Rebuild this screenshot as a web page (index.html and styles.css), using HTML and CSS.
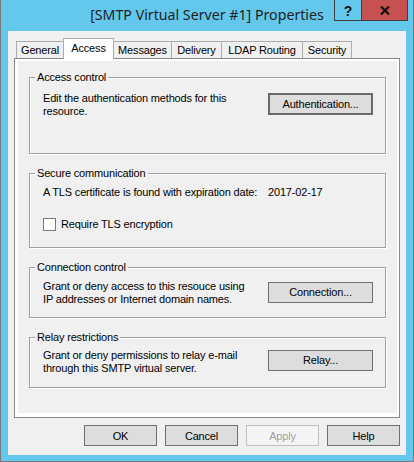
FILE: index.html
```html
<!DOCTYPE html>
<html>
<head>
<meta charset="utf-8">
<link rel="stylesheet" href="styles.css">
</head>
<body>
<div class="window">
  <div class="titlebar">
    <div class="title">[SMTP Virtual Server #1] Properties</div>
    <div class="caption-btns">
      <div class="cbtn help">?</div>
      <div class="cbtn close">
        <svg width="10" height="9" viewBox="0 0 10 9"><path d="M1 0.5 L9 8.5 M9 0.5 L1 8.5" stroke="#111" stroke-width="2.2" fill="none"/></svg>
      </div>
    </div>
  </div>
  <div class="client">
    <div class="tabs">
      <div class="tab t-general">General</div>
      <div class="tab active t-access">Access</div>
      <div class="tab t-messages">Messages</div>
      <div class="tab t-delivery">Delivery</div>
      <div class="tab t-ldap">LDAP Routing</div>
      <div class="tab t-security">Security</div>
    </div>
    <div class="panel">
      <div class="page">
        <fieldset class="group g-access">
          <legend>Access control</legend>
          <div class="gbody">
            <div class="gtext">Edit the authentication methods for this<br>resource.</div>
            <div class="btn default">Authentication...</div>
          </div>
        </fieldset>
        <fieldset class="group g-secure">
          <legend>Secure communication</legend>
          <div class="gbody col">
            <div class="certrow">
              <span>A TLS certificate is found with expiration date:</span>
              <span class="date">2017-02-17</span>
            </div>
            <div class="checkrow">
              <span class="checkbox"></span>
              <span>Require TLS encryption</span>
            </div>
          </div>
        </fieldset>
        <fieldset class="group g-conn">
          <legend>Connection control</legend>
          <div class="gbody">
            <div class="gtext">Grant or deny access to this resouce using<br>IP addresses or Internet domain names.</div>
            <div class="btn">Connection...</div>
          </div>
        </fieldset>
        <fieldset class="group g-relay">
          <legend>Relay restrictions</legend>
          <div class="gbody">
            <div class="gtext">Grant or deny permissions to relay e-mail<br>through this SMTP virtual server.</div>
            <div class="btn">Relay...</div>
          </div>
        </fieldset>
      </div>
    </div>
    <div class="buttons">
      <div class="btn dlg">OK</div>
      <div class="btn dlg">Cancel</div>
      <div class="btn dlg disabled">Apply</div>
      <div class="btn dlg">Help</div>
    </div>
  </div>
</div>
</body>
</html>
```
FILE: styles.css
```css
* { box-sizing: border-box; }
html, body { margin: 0; padding: 0; }
body {
  width: 414px;
  height: 462px;
  overflow: hidden;
  font-family: "Liberation Sans", Arial, sans-serif;
  font-size: 11px;
  letter-spacing: -0.17px;
  color: #000;
}
.window {
  width: 414px;
  height: 462px;
  background: #63c8ec;
  border: 1px solid #7a7a7a;
  border-top: none;
  display: flex;
  flex-direction: column;
  padding: 0 7px 6px 7px;
}
.titlebar {
  height: 31px;
  margin: 0 -7px;
  display: grid;
  grid-template-columns: 1fr auto 1fr;
  align-items: start;
}
.title {
  grid-column: 2;
  font-family: "Noto Sans", "Open Sans", sans-serif;
  font-size: 14.2px;
  letter-spacing: 0;
  line-height: 20px;
  padding-top: 5px;
  color: #222;
  white-space: nowrap;
}
.caption-btns {
  grid-column: 3;
  justify-self: end;
  margin-right: 5px;
  display: flex;
  border: 1px solid #3f3f3f;
  border-top: none;
  height: 21px;
}
.cbtn {
  display: flex;
  align-items: center;
  justify-content: center;
}
.help {
  width: 27px;
  border-right: 1px solid #3f3f3f;
  font-weight: bold;
  font-size: 14px;
  letter-spacing: 0;
  color: #111;
  padding-top: 1px;
}
.close {
  width: 45px;
  background: #c75050;
  padding-top: 1px;
}
.close svg { display: block; }

.client {
  flex: 1;
  background: #f0f0f0;
  padding: 7px 6px 0 6px;
  display: flex;
  flex-direction: column;
}
.tabs {
  height: 20px;
  display: flex;
  align-items: flex-end;
  padding-left: 2px;
}
.tab {
  height: 17px;
  line-height: 16px;
  border: 1px solid #acacac;
  border-bottom: none;
  background: #f0f0f0;
  text-align: center;
  white-space: nowrap;
  margin-left: -1px;
}
.tab:first-child { margin-left: 0; }
.tab.active {
  height: 21px;
  margin-bottom: -1px;
  background: #fff;
  padding-top: 1px;
  position: relative;
  z-index: 1;
}
.t-general { width: 48px; }
.t-access { width: 51px; }
.t-messages { width: 59px; }
.t-delivery { width: 51px; }
.t-ldap { width: 82px; }
.t-security { width: 50px; }

.panel {
  height: 360px;
  border: 1px solid #898989;
  background: #fff;
  padding: 2px 2px 4px 3px;
}
.page {
  height: 100%;
  background: #f0f0f0;
  padding: 0 11px;
  display: flex;
  flex-direction: column;
}
.group {
  margin: 13px 0 0 0;
  padding: 0;
  border: 1px solid #a0a0a0;
  box-shadow: inset 1px 1px 0 #fff, 1px 1px 0 #fff;
  min-width: 0;
}
.g-access { margin-top: 10px; }
.group legend {
  margin-left: 5px;
  padding: 0 2px;
  line-height: 13px;
  background: #f0f0f0;
}
.gbody {
  display: flex;
  justify-content: space-between;
  align-items: flex-start;
  padding: 0 12px 0 13px;
  line-height: 13px;
}
.gbody.col {
  flex-direction: column;
  justify-content: flex-start;
  align-items: stretch;
}
.g-access .gbody { height: 69px; padding-top: 8px; }
.g-secure .gbody { height: 67px; padding-top: 6px; }
.g-conn .gbody { height: 43px; padding-top: 6px; }
.g-relay .gbody { height: 43px; padding-top: 5px; }
.g-access .btn { margin-top: 1px; }
.g-conn .btn { margin-top: 2px; }
.g-relay .btn { margin-top: 1px; }

.certrow {
  display: flex;
  justify-content: space-between;
}
.date { width: 105px; }
.checkrow {
  display: flex;
  align-items: center;
  gap: 5px;
  margin-top: 19px;
}
.checkbox {
  width: 13px;
  height: 13px;
  border: 1px solid #7a7a7a;
  background: #fff;
}

.btn {
  width: 105px;
  height: 21px;
  border: 1px solid #707070;
  background: #dddddd;
  display: flex;
  align-items: center;
  justify-content: center;
  flex-shrink: 0;
}
.btn.default {
  height: 22px;
  border: 2px solid #6a6a6a;
}
.buttons {
  display: flex;
  justify-content: flex-end;
  gap: 8px;
  margin-top: 7px;
}
.btn.dlg { width: 73px; }
.btn.disabled {
  background: #f4f4f4;
  border-color: #bfbfbf;
  color: #a0a0a0;
}
```
